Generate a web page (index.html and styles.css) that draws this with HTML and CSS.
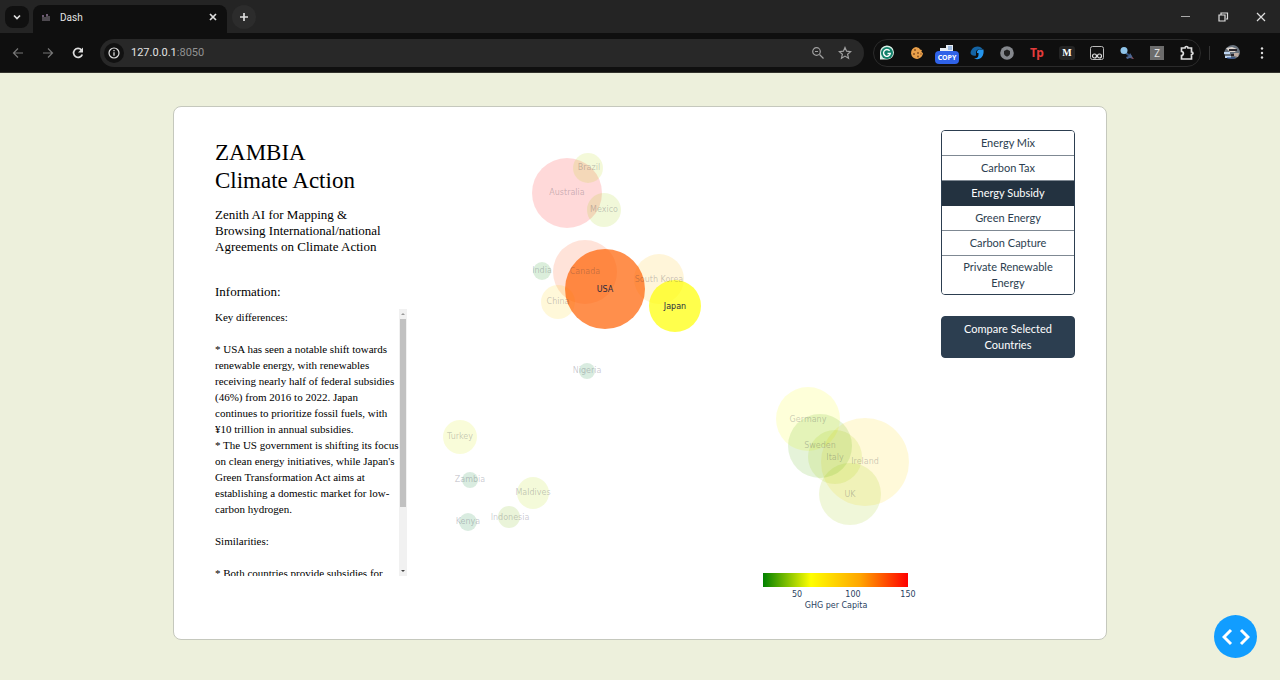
FILE: index.html
```html
<!DOCTYPE html>
<html lang="en">
<head>
<meta charset="utf-8">
<title>Dash</title>
<link rel="stylesheet" href="styles.css">
</head>
<body>
<header class="browser">
  <div class="tabbar">
    <button class="tab-menu" aria-label="Search tabs"><svg width="10" height="10" viewBox="0 0 10 10"><path class="ln white bold" d="M2 3.5l3 3 3-3"/></svg></button>
    <div class="tab">
      <svg width="9" height="9" viewBox="0 0 9 9"><path d="M1 2v6M3 4v4M5 1v7M7 3v5" stroke="#8d8490" stroke-width="1"/><path d="M1 2v2M5 1v2" stroke="#8f6f9a"/></svg>
      <span class="tab-title">Dash</span>
      <button class="plain" aria-label="Close tab"><svg width="10" height="10" viewBox="0 0 10 10"><path class="ln white bold" d="M2 2l6 6M8 2l-6 6"/></svg></button>
    </div>
    <button class="new-tab" aria-label="New tab"><svg width="12" height="12" viewBox="0 0 12 12"><path class="ln white bold" d="M6 2v8M2 6h8"/></svg></button>
    <div class="window-buttons">
      <button class="plain" aria-label="Minimize"><svg width="12" height="12" viewBox="0 0 12 12"><path d="M2 5.500h9" stroke="#aaa"/></svg></button>
      <button class="plain" aria-label="Restore"><svg width="12" height="12" viewBox="0 0 12 12"><path class="ln white" d="M2 4h6v6H2zM4 3.500V2h6.500v6H9"/></svg></button>
      <button class="plain" aria-label="Close"><svg width="12" height="12" viewBox="0 0 12 12"><path class="ln white" d="M2 2l8 8M10 2l-8 8"/></svg></button>
    </div>
  </div>
  <div class="toolbar">
    <nav class="nav">
      <button class="plain" aria-label="Back"><svg width="14" height="14" viewBox="0 0 14 14"><path class="ln dim" d="M12 7H2.500M7 2.500L2.500 7 7 11.500"/></svg></button>
      <button class="plain" aria-label="Forward"><svg width="14" height="14" viewBox="0 0 14 14"><path class="ln dim" d="M2 7h9.500M7 2.500L11.500 7 7 11.500"/></svg></button>
      <button class="plain" aria-label="Reload"><svg width="14" height="14" viewBox="0 0 14 14"><path class="ln white bold" d="M11.300 8.500A4.500 4.500 0 1 1 10.500 4"/><path d="M12 1.500v5H7z" fill="#ddd"/></svg></button>
    </nav>
    <div class="omnibox">
      <span class="info"><svg width="12" height="12" viewBox="0 0 12 12"><circle class="ln white" cx="6" cy="6" r="5"/><path d="M6 5.300v3.500M6 3v1.300" stroke="#ddd" stroke-width="1.300"/></svg></span>
      <span class="url">127.0.0.1<span class="port">:8050</span></span>
      <button class="plain" aria-label="Zoom"><svg width="14" height="14" viewBox="0 0 14 14"><circle class="ln grey" cx="5.500" cy="5.500" r="3.800"/><path class="ln grey" d="M8.500 8.500L12.500 12.500M4 5.500h3"/></svg></button>
      <button class="plain" aria-label="Bookmark"><svg width="14" height="14" viewBox="0 0 14 14"><path class="ln grey" d="M7 1.500l1.600 3.700 4 .4-3 2.600.9 4L7 10.100l-3.500 2.100.9-4-3-2.600 4-.4z"/></svg></button>
    </div>
    <div class="extensions">
      <svg width="16" height="16" viewBox="0 0 16 16"><path d="M1 14.500V8a7 7 0 1 1 7 6.500z" fill="#d9efe6"/><circle cx="8" cy="8" r="6" fill="#11806a"/><path d="M10.600 5.800A3.400 3.400 0 1 0 11.300 8.500H8.500" fill="none" stroke="#fff" stroke-width="1.400"/></svg>
      <svg width="16" height="16" viewBox="0 0 16 16"><path d="M7 2a6 6 0 1 0 7 6 2 2 0 0 1-1-3 3 3 0 0 1-3-2z" fill="#e9a04a"/><g fill="#8a5222"><circle cx="6" cy="5" r="1"/><circle cx="9" cy="8" r="1"/><circle cx="5" cy="9" r="1"/><circle cx="9" cy="11.500" r="1"/><circle cx="12" cy="9" r=".7"/></g></svg>
      <span class="copy-ext"><svg width="16" height="6" viewBox="0 0 16 6"><path d="M1 3h7v3H1zM7 0h7v6H7z" fill="#e8eef5"/><path d="M9 2h4M9 4h4" stroke="#5689ca"/></svg><span class="copy-badge">COPY</span></span>
      <svg width="16" height="16" viewBox="0 0 16 16"><path d="M12 2.500A7 7 0 0 0 1.500 8c.5 2.500 3 3 5.500 2.500V7.500C7 5 9 4 13.500 4z" fill="#1464a5"/><path d="M14.500 4.500h-3C8.500 4.500 8 6 8 8h1.500v2c0 2.500-2 3.500-4.500 3.500 5.500 2.500 10.500-1.500 9.500-9z" fill="#2494ec"/></svg>
      <svg width="16" height="16" viewBox="0 0 16 16"><circle cx="8" cy="8" r="6.800" fill="#85888d"/><path d="M5 6l3-1.500L11 6v2.500c0 1.500-1.500 2.500-3 3.200-1.500-.7-3-1.700-3-3.200z" fill="#222"/></svg>
      <span class="tp">Tp</span>
      <span class="medium">M</span>
      <svg width="16" height="16" viewBox="0 0 16 16"><rect x="1.500" y="1.500" width="13" height="13" rx="2" fill="#111" stroke="#bbb"/><circle class="ln white" cx="5.500" cy="11" r="2"/><circle class="ln white" cx="10.500" cy="11" r="2"/></svg>
      <svg width="16" height="16" viewBox="0 0 16 16"><path d="M7 8l5 4" stroke="#31537f" stroke-width="2"/><path d="M7 12l3-1 1-3 2 3 1 3-3-1-3 1z" fill="#4c6793"/><circle cx="5" cy="5.500" r="3.500" fill="#8fc4e9"/><path d="M12.500 12l2 2" stroke="#a14b4b"/></svg>
      <span class="z-ext">Z</span>
      <button class="plain" aria-label="Extensions"><svg width="16" height="16" viewBox="0 0 16 16"><path class="ln white bold" d="M2.500 3H6c0-2 3-2 3 0h3.500v4c2 0 2 2.500 0 2.500V14h-10v-3.500c2.500 0 2.500-4 0-4z"/></svg></button>
    </div>
    <span class="divider"></span>
    <svg class="avatar" width="18" height="18" viewBox="0 0 18 18"><path d="M1 9C2 4 6 1 10 1c4 0 7 4 7 8-1 4-4 6-8 6-5 0-7-2-8-6z" fill="#68727d"/><path d="M1 8h6v2H1zM2 12h6v2H2z" fill="#bed5f2"/><path d="M3 4l6-1 5 2-2 3H7z" fill="#ddd5ce"/><path d="M6 6h8M8 11h4" stroke="#28242a" stroke-width="2"/><path d="M11 9h5l-1 4-4-1z" fill="#bcaaa0"/><path d="M4 14h8" stroke="#173f87"/></svg>
    <button class="plain" aria-label="Menu"><svg width="14" height="14" viewBox="0 0 14 14" fill="#ddd"><circle cx="7" cy="2.500" r="1.200"/><circle cx="7" cy="7" r="1.200"/><circle cx="7" cy="11.500" r="1.200"/></svg></button>
  </div>
</header>

<main class="card">
  <section class="about">
    <h1>ZAMBIA<br>Climate Action</h1>
    <p class="tagline">Zenith AI for Mapping &amp; Browsing International/national Agreements on Climate Action</p>
    <h2>Information:</h2>
    <div class="reader">
      <div class="reader-text">Key differences:

* USA has seen a notable shift towards renewable energy, with renewables receiving nearly half of federal subsidies (46%) from 2016 to 2022. Japan continues to prioritize fossil fuels, with ¥10 trillion in annual subsidies.
* The US government is shifting its focus on clean energy initiatives, while Japan's Green Transformation Act aims at establishing a domestic market for low-carbon hydrogen.

Similarities:

* Both countries provide subsidies for</div>
      <div class="scrollbar"><svg width="8" height="10" viewBox="0 0 8 10"><path d="M2 6h4L4 4z" fill="#999"/></svg><span class="thumb"></span><svg width="8" height="10" viewBox="0 0 8 10"><path d="M2 4h4L4 6z" fill="#444"/></svg></div>
    </div>
  </section>

  <svg class="chart" viewBox="426 130 496 491" role="img" aria-label="GHG per capita by country">
    <defs><linearGradient id="ghg"><stop offset="0" stop-color="#008000"/><stop offset=".33" stop-color="#ffff00"/><stop offset=".67" stop-color="#ffa500"/><stop offset="1" stop-color="#ff0000"/></linearGradient></defs>
    <g class="faded">
      <circle cx="567" cy="193" r="35" fill="#ff0000"/>
      <circle cx="588" cy="168" r="15" fill="#b4d800"/>
      <circle cx="604" cy="210" r="17" fill="#a0cf00"/>
      <circle cx="585" cy="272" r="32" fill="#ff4200"/>
      <circle cx="542" cy="271" r="9" fill="#109010"/>
      <circle cx="558" cy="302" r="17" fill="#ffce00"/>
      <circle cx="659" cy="279" r="25" fill="#ffbe00"/>
      <circle cx="587" cy="371" r="8" fill="#008030"/>
      <circle cx="460" cy="437" r="17" fill="#d8ee00"/>
      <circle cx="470" cy="480" r="8" fill="#008030"/>
      <circle cx="468" cy="522" r="9" fill="#008030"/>
      <circle cx="509" cy="517" r="11" fill="#70b800"/>
      <circle cx="533" cy="493" r="16" fill="#b8dc00"/>
      <circle cx="808" cy="419" r="32" fill="#f6ff00"/>
      <circle cx="865" cy="462" r="44" fill="#ffd500"/>
      <circle cx="850" cy="494" r="31" fill="#98c800"/>
      <circle cx="835" cy="457" r="27" fill="#a8d000"/>
      <circle cx="820" cy="446" r="32" fill="#50b000"/>
    </g>
    <g class="selected">
      <circle cx="605" cy="289" r="40" fill="#ff5f00"/>
      <circle cx="675" cy="306" r="26" fill="#ffff00"/>
    </g>
    <g class="label muted">
      <text x="589" y="170">Brazil</text><text x="567" y="195">Australia</text><text x="604" y="212">Mexico</text>
      <text x="585" y="274">Canada</text><text x="542" y="273">India</text><text x="558" y="304">China</text>
      <text x="659" y="282">South Korea</text><text x="587" y="373">Nigeria</text><text x="460" y="439">Turkey</text>
      <text x="470" y="482">Zambia</text><text x="468" y="524">Kenya</text><text x="510" y="520">Indonesia</text>
      <text x="533" y="495">Maldives</text><text x="808" y="422">Germany</text><text x="820" y="448">Sweden</text>
      <text x="835" y="460">Italy</text><text x="865" y="464">Ireland</text><text x="850" y="497">UK</text>
    </g>
    <g class="label"><text x="605" y="292">USA</text><text x="675" y="309">Japan</text></g>
    <rect x="763" y="573" width="145" height="14" fill="url(#ghg)"/>
    <g class="label axis"><text x="797" y="597">50</text><text x="853" y="597">100</text><text x="908" y="597">150</text><text x="836" y="608">GHG per Capita</text></g>
  </svg>

  <aside class="actions">
    <div class="topics">
      <button class="topic">Energy Mix</button>
      <button class="topic">Carbon Tax</button>
      <button class="topic active" aria-pressed="true">Energy Subsidy</button>
      <button class="topic">Green Energy</button>
      <button class="topic">Carbon Capture</button>
      <button class="topic">Private Renewable Energy</button>
    </div>
    <button class="compare">Compare Selected Countries</button>
  </aside>
</main>
<button class="debug" aria-label="Toggle debug menu"><svg width="28" height="18" viewBox="0 0 28 18"><path d="M9 2L2 9l7 7M19 2l7 7-7 7" fill="none" stroke="#fff" stroke-width="3"/></svg></button>
</body>
</html>
```
FILE: styles.css
```css
* { box-sizing: border-box; }
body { margin: 0; min-height: 100vh; background: #edf0dc; color: #000; font-family: "Liberation Serif", serif; }
button { font: inherit; cursor: pointer; }
svg { display: block; flex-shrink: 0; }
.plain { padding: 0; border: 0; background: none; }
.ln { fill: none; stroke-width: 1.2; }
.white { stroke: #dedede; }
.grey { stroke: #a0a0a0; }
.dim { stroke: #777; }
.bold { stroke-width: 1.7; }

.browser { background: #0f0f0f; border-bottom: 1px solid #33332d; font-family: "Noto Sans", sans-serif; color: #e3e3e3; }
.tabbar { display: flex; align-items: center; height: 33px; padding: 0 13px 0 5px; background: #242424; }
.tab-menu { display: grid; place-items: center; width: 24px; height: 22px; padding: 0; border: 0; border-radius: 8px; background: #101010; }
.tab { display: flex; align-items: center; align-self: flex-end; gap: 9px; width: 194px; height: 28px; margin-left: 4px; padding: 0 9px 4px; border-radius: 8px 8px 0 0; background: #0f0f0f; }
.tab-title { flex: 1; font-family: Roboto, sans-serif; font-size: 10px; }
.new-tab { display: grid; place-items: center; width: 24px; height: 24px; margin-left: 5px; padding: 0; border: 0; border-radius: 50%; background: #2c2c2c; }
.window-buttons { display: flex; gap: 26px; margin-left: auto; }
.toolbar { display: flex; align-items: center; height: 39px; padding: 0 11px; }
.nav { display: flex; gap: 16px; }
.omnibox { display: flex; align-items: center; flex: 1; gap: 13px; height: 28px; margin-left: 15px; padding: 0 12px 0 4px; border-radius: 14px; background: #282828; }
.info { display: grid; place-items: center; width: 20px; height: 20px; border-radius: 50%; background: #111; }
.url { flex: 1; margin-left: -6px; font-family: Roboto, sans-serif; font-size: 11px; }
.port { color: #929292; }
.extensions { display: flex; align-items: center; gap: 14px; height: 28px; margin-left: 9px; padding: 0 5px; border: 1px solid #2b2b2b; border-radius: 14px; }
.copy-ext { display: flex; flex-direction: column; align-items: center; width: 24px; margin: 4px -4px 0; }
.copy-badge { width: 24px; border-radius: 4px; background: #2f62e8; color: #fff; font-size: 7px; font-weight: 700; line-height: 13px; text-align: center; }
.tp { width: 16px; color: #e43c3c; font-size: 12px; font-weight: 700; text-align: center; }
.medium { width: 16px; border-radius: 3px; background: #242424; color: #fff; font-family: "Liberation Serif", serif; font-size: 10px; font-weight: 700; line-height: 14px; text-align: center; }
.z-ext { width: 14px; margin: 0 1px; background: #6c6c6c; color: #e0e0e0; font-size: 10px; line-height: 14px; text-align: center; }
.divider { width: 1px; height: 14px; margin: 0 13px 0 8px; background: #333; }
.avatar { margin-right: 14px; }

.card { display: grid; grid-template-columns: 192px minmax(0, 1fr) 134px; column-gap: 19px; margin: 33px 173px 40px; padding: 23px 31px 18px 41px; border: 1px solid #c5c8bd; border-radius: 8px; background: #fff; }
.about h1 { margin: 9px 0 12px; font-size: 23px; font-weight: 400; line-height: 28px; }
.tagline { margin: 0; padding-right: 14px; font-size: 13px; line-height: 16px; }
.about h2 { margin: 28px 0 8px; font-size: 13px; font-weight: 400; line-height: 18px; }
.reader { display: flex; height: 267px; }
.reader-text { flex: 1; overflow: hidden; white-space: pre-wrap; font-size: 11px; line-height: 16px; }
.scrollbar { display: flex; flex-direction: column; width: 8px; background: #f1f1f1; }
.thumb { width: 6px; height: 188px; margin: 0 auto auto; background: #c1c1c1; }
.chart { width: 100%; height: auto; }
.faded { fill-opacity: 0.15; }
.selected { fill-opacity: 0.7; }
.label { fill: #2a2a3f; font-family: "DejaVu Sans", sans-serif; font-size: 8px; text-anchor: middle; }
.muted { fill-opacity: 0.25; }
.axis { fill: #2a3f5f; }
.actions { font-family: Lato, sans-serif; font-size: 11px; line-height: 16px; }
.topics { display: flex; flex-direction: column; border: 1px solid #2c3e50; border-radius: 4px; overflow: hidden; }
.topic { padding: 4px 16px; border: 0; border-bottom: 1px solid #7f8993; background: #fff; color: #2c3e50; }
.topic:last-child { padding: 3px 16px; border-bottom: 0; }
.topic.active { background: #233240; border-color: #233240; color: #fff; }
.compare { width: 100%; margin-top: 21px; padding: 4px 16px; border: 1px solid #2c3e50; border-radius: 4px; background: #2c3e50; color: #fff; }
.debug { position: fixed; right: 23px; bottom: 22px; display: grid; place-items: center; width: 43px; height: 43px; padding: 0; border: 0; border-radius: 50%; background: #119dff; }
```
